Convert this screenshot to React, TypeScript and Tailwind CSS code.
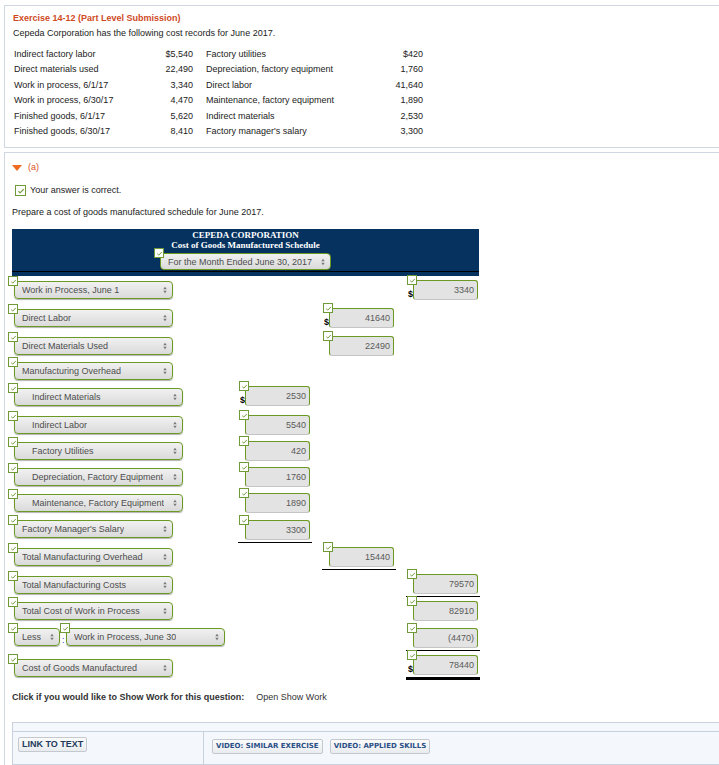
import React from "react";

type Row = {
  label: string;
  h: string;
  indent?: boolean;
  less?: boolean;
  col?: 1 | 2 | 3;
  value?: string;
  dollar?: boolean;
  line?: "single" | "double";
  numTop?: string;
};

const costs = [
  ["Indirect factory labor", "$5,540", "Factory utilities", "$420"],
  ["Direct materials used", "22,490", "Depreciation, factory equipment", "1,760"],
  ["Work in process, 6/1/17", "3,340", "Direct labor", "41,640"],
  ["Work in process, 6/30/17", "4,470", "Maintenance, factory equipment", "1,890"],
  ["Finished goods, 6/1/17", "5,620", "Indirect materials", "2,530"],
  ["Finished goods, 6/30/17", "8,410", "Factory manager's salary", "3,300"],
];

const rows: Row[] = [
  { label: "Work in Process, June 1", h: "h-[28px]", col: 3, value: "3340", dollar: true },
  { label: "Direct Labor", h: "h-[28px]", col: 2, value: "41640", dollar: true },
  { label: "Direct Materials Used", h: "h-[25px]", col: 2, value: "22490" },
  { label: "Manufacturing Overhead", h: "h-[26px]" },
  { label: "Indirect Materials", h: "h-[28px]", indent: true, col: 1, value: "2530", dollar: true, numTop: "mt-[3px]" },
  { label: "Indirect Labor", h: "h-[26px]", indent: true, col: 1, value: "5540" },
  { label: "Factory Utilities", h: "h-[26px]", indent: true, col: 1, value: "420" },
  { label: "Depreciation, Factory Equipment", h: "h-[26px]", indent: true, col: 1, value: "1760" },
  { label: "Maintenance, Factory Equipment", h: "h-[26px]", indent: true, col: 1, value: "1890" },
  { label: "Factory Manager's Salary", h: "h-[28px]", col: 1, value: "3300", line: "single", numTop: "mt-[5px]" },
  { label: "Total Manufacturing Overhead", h: "h-[28px]", col: 2, value: "15440", line: "single" },
  { label: "Total Manufacturing Costs", h: "h-[26px]", col: 3, value: "79570", line: "single", numTop: "mt-[3px]" },
  { label: "Total Cost of Work in Process", h: "h-[26px]", col: 3, value: "82910" },
  { label: "Work in Process, June 30", h: "h-[31px]", less: true, col: 3, value: "(4470)", line: "single", numTop: "mt-[5px]" },
  { label: "Cost of Goods Manufactured", h: "h-[32px]", col: 3, value: "78440", dollar: true, line: "double", numTop: "mt-[1px]" },
];

function Tick({ className = "" }: { className?: string }) {
  return (
    <span className={`absolute z-10 flex h-[10px] w-[10px] items-center justify-center border border-[#6f9a37] bg-white ${className}`}>
      <svg viewBox="0 0 10 10" className="h-[7px] w-[7px]">
        <path d="M1.8 5.3 L4 7.3 L8.3 2.8" fill="none" stroke="#6f9a37" strokeWidth="1.4" />
      </svg>
    </span>
  );
}

function Arrows() {
  return (
    <svg viewBox="0 0 5 9" className="h-[8px] w-[4px] shrink-0">
      <path d="M2.5 0.5 L4.7 3.6 H0.3Z M2.5 8.5 L0.3 5.4 H4.7Z" fill="#7a7a7a" />
    </svg>
  );
}

function Select({ label, width, indent, height = "h-[18px]" }: { label: string; width: string; indent?: boolean; height?: string }) {
  return (
    <div className={`relative ${width}`}>
      <Tick className="-left-[6px] -top-[5px]" />
      <div className={`flex ${height} items-center justify-between rounded-[4px] border-[1.5px] border-[#6b9a24] bg-[linear-gradient(#f1f1f1,#dadada)] pl-[7px] pr-[5px] text-[#4d4d4d] shadow-[0_1px_1px_rgba(0,0,0,0.3)]`}>
        <span className={`truncate ${indent ? "pl-[10px]" : ""}`}>{label}</span>
        <Arrows />
      </div>
    </div>
  );
}

function NumCell({ row }: { row: Row }) {
  const line =
    row.line === "double" ? "border-b-[3px] border-black" : row.line === "single" ? "border-b border-black" : "";
  return (
    <div className={`relative w-[74px] pb-[2px] ${row.numTop ?? "mt-[4px]"} ${line}`}>
      {row.dollar && <span className="absolute bottom-[2px] left-[2px] font-bold text-black">$</span>}
      <div className="relative ml-[7px] w-[65px]">
        <Tick className="-left-[6px] -top-[5px]" />
        <div className="flex h-[20px] items-center justify-end rounded-[3px] border-[1.5px] border-[#6b9a24] border-b-[#c4c4c4] bg-[#e3e3e3] pr-[3px] text-[#5a5a5a]">
          {row.value}
        </div>
      </div>
    </div>
  );
}

export default function App() {
  return (
    <div className="h-[765px] overflow-hidden bg-white font-['Liberation_Sans',Arial,sans-serif] text-[9px] leading-[11px] text-[#222]">
      <div className="pt-[5px]">
        <div className="ml-[4px] border border-r-0 border-[#cfd7e2] pb-[8px] pl-[8px] pt-[7px]">
          <p className="font-bold text-[#cf4a1f]">Exercise 14-12 (Part Level Submission)</p>
          <p className="mt-[4px]">Cepeda Corporation has the following cost records for June 2017.</p>
          <div className="ml-[1px] mt-[8px] grid grid-cols-[130px_49px_13px_160px_57px] leading-[15.4px]">
            {costs.map((c) => (
              <React.Fragment key={c[0]}>
                <span>{c[0]}</span>
                <span className="text-right">{c[1]}</span>
                <span />
                <span>{c[2]}</span>
                <span className="text-right">{c[3]}</span>
              </React.Fragment>
            ))}
          </div>
        </div>
      </div>

      <div className="ml-[4px] mt-[4px] border-l border-t border-[#cfd7e2] pl-[7px]">
        <div className="mt-[9px] flex h-[11px] items-center gap-[6px]">
          <svg viewBox="0 0 10 6" className="h-[6px] w-[10px]">
            <path d="M0 0 H10 L5 6Z" fill="#f26a21" />
          </svg>
          <span className="text-[#d9531e]">(a)</span>
        </div>
        <div className="mt-[12px] flex h-[11px] items-center gap-[4px] pl-[3px]">
          <span className="flex h-[11px] w-[11px] items-center justify-center border border-[#6f9a37] bg-white">
            <svg viewBox="0 0 10 10" className="h-[8px] w-[8px]">
              <path d="M1.8 5.3 L4 7.3 L8.3 2.8" fill="none" stroke="#6f9a37" strokeWidth="1.4" />
            </svg>
          </span>
          <span>Your answer is correct.</span>
        </div>
        <p className="mt-[11px]">Prepare a cost of goods manufactured schedule for June 2017.</p>

        <div className="mt-[11px] w-[467px] bg-[#06325f] pb-[4px] pt-[1px] text-center font-['Liberation_Serif',serif] font-bold leading-[10px] text-white">
          <p>CEPEDA CORPORATION</p>
          <p>Cost of Goods Manufactured Schedule</p>
          <div className="mt-[3px] flex justify-center font-['Liberation_Sans',Arial,sans-serif] font-normal">
            <Select label="For the Month Ended June 30, 2017" width="w-[171px]" height="h-[17px]" />
          </div>
          <div className="mt-[1px] h-[1px] bg-black" />
        </div>

        {rows.map((row) => (
          <div key={row.label} className={`grid grid-cols-[226px_84px_84px_84px] ${row.h}`}>
            <div className="ml-[2px] mt-[5px]">
              {row.less ? (
                <div className="flex items-start">
                  <Select label="Less" width="w-[46px]" />
                  <span className="mt-[7px] w-[6px] pl-[2px] text-[#1a3cc4]">:</span>
                  <Select label={row.label} width="w-[159px]" />
                </div>
              ) : (
                <Select label={row.label} width={row.indent ? "w-[169px]" : "w-[159px]"} indent={row.indent} />
              )}
            </div>
            <div>{row.col === 1 && <NumCell row={row} />}</div>
            <div>{row.col === 2 && <NumCell row={row} />}</div>
            <div>{row.col === 3 && <NumCell row={row} />}</div>
          </div>
        ))}

        <p className="mt-[6px] text-[#333]">
          <span className="font-bold">Click if you would like to Show Work for this question:</span>
          <span className="ml-[12px]">Open Show Work</span>
        </p>

        <div className="mt-[19px] border border-r-0 border-[#c9d1dc] bg-[#f4f7fb]">
          <div className="h-[9px] border-b border-[#c9d1dc]" />
          <div className="flex h-[32px]">
            <div className="w-[191px] border-r border-[#c9d1dc] pl-[5px] pt-[5px]">
              <button className="h-[15px] rounded-[2px] border border-[#c4c9d0] bg-[linear-gradient(#fbfbfb,#e9ecef)] px-[3px] font-bold leading-[13px] text-[#233a5e]">
                LINK TO TEXT
              </button>
            </div>
            <div className="flex items-start gap-[7px] pl-[8px] pt-[7px] font-['DejaVu_Sans',sans-serif]">
              <button className="h-[15px] rounded-[2px] border border-[#c4c9d0] bg-[linear-gradient(#fbfbfb,#e9ecef)] px-[3px] text-[7px] font-bold leading-[13px] text-[#2a4f86]">
                VIDEO: SIMILAR EXERCISE
              </button>
              <button className="h-[15px] rounded-[2px] border border-[#c4c9d0] bg-[linear-gradient(#fbfbfb,#e9ecef)] px-[3px] text-[7px] font-bold leading-[13px] text-[#2a4f86]">
                VIDEO: APPLIED SKILLS
              </button>
            </div>
          </div>
        </div>
      </div>
    </div>
  );
}
